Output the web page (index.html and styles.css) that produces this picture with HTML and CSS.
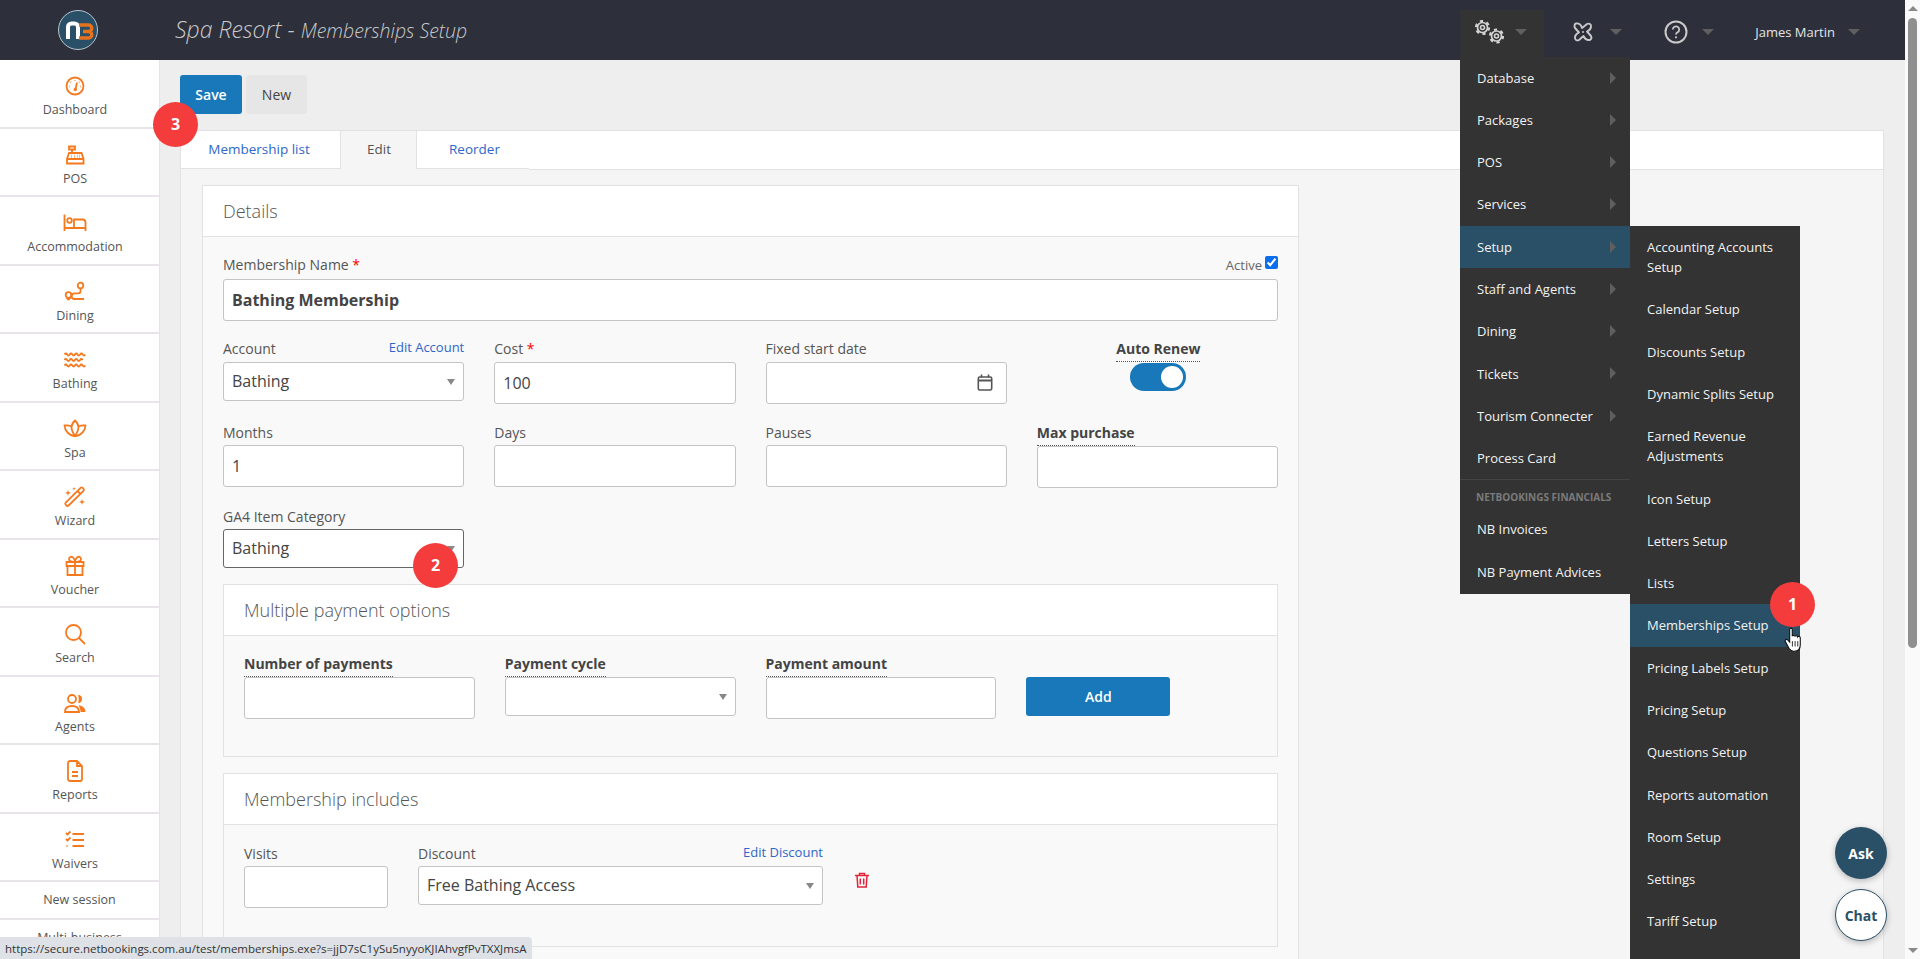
FILE: index.html
```html
<!DOCTYPE html>
<html lang="en">
<head>
  <meta charset="UTF-8" />
  <meta name="viewport" content="width=device-width, initial-scale=1.0" />
  <title>Spa Resort - Memberships Setup</title>
  <link rel="stylesheet" href="styles.css">
</head>
<body>
  <div class="page">

    <!-- Top bar -->
    <header class="topbar">
      <div class="logo">
        <svg width="40" height="40" viewBox="0 0 40 40">
          <circle cx="20" cy="20" r="19.5" fill="#2a5068" stroke="#b9c4cc" stroke-width="1"/>
          <path d="M10 29V17a3.5 3.5 0 0 1 3.5-3.5h3a3.5 3.5 0 0 1 3.5 3.5v12" fill="none" stroke="#fff" stroke-width="4"/>
          <path d="M21 15h9.5a3 3 0 0 1 0 6.5H25m5.500 0a3.200 3.200 0 0 1 0 6.500H21" fill="none" stroke="#e8711c" stroke-width="3.400"/>
        </svg>
      </div>
      <div class="title">Spa Resort - <small>Memberships Setup</small></div>
      <nav class="topnav">
        <div class="topnav-item topnav-open">
          <svg width="29" height="24" viewBox="0 0 29 24" fill="none" stroke="#d4d4d4">
            <circle cx="7.500" cy="7.500" r="2" stroke-width="1.600"/>
            <circle cx="7.500" cy="7.500" r="5" stroke-width="1.700"/>
            <circle cx="7.500" cy="7.500" r="6.500" stroke-width="2.200" stroke-dasharray="3.200 3.610"/>
            <circle cx="21.500" cy="16" r="2" stroke-width="1.600"/>
            <circle cx="21.500" cy="16" r="5" stroke-width="1.700"/>
            <circle cx="21.500" cy="16" r="6.500" stroke-width="2.200" stroke-dasharray="3.200 3.610"/>
          </svg>
          <span class="caret"></span>
        </div>
        <div class="topnav-item topnav-fan">
          <svg width="20" height="20" viewBox="0 0 20 20" fill="none" stroke="#c9c9c9" stroke-width="1.900" stroke-linejoin="round">
            <path d="M3 1.500C5 1 8 2 9 6l5-4c2-1 4.500 0 4 3-.5 3-3 4-4 4.500l4 4.500c1 2 0 4.500-3 4-3-.5-4-3-4.500-4L6 18c-2 1-4.500 0-4-3 .5-3 3-4 4-4.500L2 6C1 4 1.500 2 3 1.500z"/>
            <circle cx="10" cy="10" r="1" fill="#c9c9c9" stroke="none"/>
          </svg>
          <span class="caret"></span>
        </div>
        <div class="topnav-item topnav-help">
          <svg width="24" height="24" viewBox="0 0 24 24" fill="none" stroke="#c9c9c9" stroke-width="2">
            <circle cx="12" cy="12" r="10.500"/>
            <path d="M8.800 9.500a3.200 3.200 0 1 1 4.800 2.800c-1 .6-1.600 1.200-1.600 2.200" stroke-width="1.800"/>
            <circle cx="12" cy="17.300" r="1.100" fill="#c9c9c9" stroke="none"/>
          </svg>
          <span class="caret"></span>
        </div>
        <div class="topnav-item topnav-user">
          <span>James Martin</span>
          <span class="caret"></span>
        </div>
      </nav>
    </header>

    <div class="layout">

      <!-- Side menu -->
      <aside class="sidebar">
        <a class="side-item">
          <svg class="side-icon" viewBox="0 0 24 24"><circle cx="12" cy="12" r="8.500"/><path d="M12 6v.5M7.500 8l.4.4M16.500 8l-.4.4M6.300 12.500h.5M18 12.500h-.5M14 8.500l-1.500 6.500"/><circle cx="12.300" cy="15.500" r=".8"/></svg>
          <span>Dashboard</span>
        </a>
        <a class="side-item">
          <svg class="side-icon" viewBox="0 0 24 24"><path d="M4 20.500h16.500v-4.500l-2-6H6l-2 6zM4 16h16.500M6 3.500h6v3H6zM9 6.500V10M8 12.500h.5M11 12.500h.5M14 12.500h.5M16.500 12.500h.5M8 14.300h.5M11 14.300h.5M14 14.300h.5M16.500 14.300h.5"/></svg>
          <span>POS</span>
        </a>
        <a class="side-item">
          <svg class="side-icon" viewBox="0 0 24 24"><path d="M1.500 3.500V20M1.500 17h21v3M22.500 17v-5.500a3 3 0 0 0-3-3H11v8.500"/><circle cx="6.500" cy="9.500" r="2.300"/></svg>
          <span>Accommodation</span>
        </a>
        <a class="side-item">
          <svg class="side-icon" viewBox="0 0 24 24"><circle cx="17.500" cy="5.500" r="2.800"/><path d="M17.500 8.300v3a2 2 0 0 1-2 2h-4a2.800 2.800 0 0 0 0 5.700H21"/><circle cx="5.500" cy="15" r="2.800"/><path d="M5.500 20l2-2.500M5.500 20l-2-2.500"/></svg>
          <span>Dining</span>
        </a>
        <a class="side-item">
          <svg class="side-icon" viewBox="0 0 24 24"><path d="M1.500 6.500q1.300-2 2.600 0t2.600 0 2.600 0 2.600 0 2.600 0 2.600 0 2.600 0 2.600 0M1.500 12q1.300-2 2.600 0t2.600 0 2.600 0 2.600 0 2.600 0 2.600 0 2.600 0M1.500 17.500q1.300-2 2.600 0t2.600 0 2.600 0 2.600 0 2.600 0 2.600 0 2.600 0 2.600 0"/></svg>
          <span>Bathing</span>
        </a>
        <a class="side-item">
          <svg class="side-icon" viewBox="0 0 24 24"><path d="M12 3.500c2 2 3.500 4 3.500 6.500 0 3-1.500 6-3.500 9-2-3-3.500-6-3.500-9C8.500 7.500 10 5.500 12 3.500z"/><path d="M8.500 9.500C6.500 8.500 4 8 1.500 8.500c.3 5 4.500 10.500 10.500 10.500s10.200-5.500 10.500-10.500c-2.500-.5-5 0-7 1"/></svg>
          <span>Spa</span>
        </a>
        <a class="side-item">
          <svg class="side-icon" viewBox="0 0 24 24"><path d="M3.500 20.500l-.8-.8a1.500 1.500 0 0 1 0-2.100L17.600 2.900a1.500 1.500 0 0 1 2.100 0l.8.8a1.500 1.500 0 0 1 0 2.100L5.600 20.500a1.500 1.500 0 0 1-2.100 0zM14.500 6l3 3"/><path class="side-fill" d="M5 5l.7 2L8 8l-2.300.8L5 11l-.7-2.200L2 8l2.300-1zM11 2l.5 1.300 1.200.5-1.200.5L11 5.500l-.5-1.200-1.300-.5 1.300-.5zM19 14l.7 2 2.300 1-2.300.8L19 20l-.7-2.200-2.300-.8 2.300-1z"/></svg>
          <span>Wizard</span>
        </a>
        <a class="side-item">
          <svg class="side-icon" viewBox="0 0 24 24"><path d="M3.500 8h17v4h-17zM4.500 12h15v9h-15zM12 8v13M12 8c-3 0-6-.5-6-3s3-3 4.500-1S12 8 12 8zM12 8c3 0 6-.5 6-3s-3-3-4.500-1S12 8 12 8z"/></svg>
          <span>Voucher</span>
        </a>
        <a class="side-item">
          <svg class="side-icon" viewBox="0 0 24 24"><circle cx="10.500" cy="10.500" r="7.500"/><path d="M16 16l6 6"/></svg>
          <span>Search</span>
        </a>
        <a class="side-item">
          <svg class="side-icon" viewBox="0 0 24 24"><circle cx="9" cy="8" r="4"/><path d="M2 21c0-4 3-6 7-6s7 2 7 6z"/><path class="side-fill" d="M15 4a4 4 0 0 1 0 8c1-2.500 1-5.500 0-8zM15.500 14.500c4 0 7 2.500 7 6.500h-5c0-2.500-.7-4.800-2-6.500z"/></svg>
          <span>Agents</span>
        </a>
        <a class="side-item">
          <svg class="side-icon" viewBox="0 0 24 24"><path d="M5 4a2 2 0 0 1 2-2h7l5 5v13a2 2 0 0 1-2 2H7a2 2 0 0 1-2-2zM14 2v5h5M9 13h6M9 17h6"/></svg>
          <span>Reports</span>
        </a>
        <a class="side-item">
          <svg class="side-icon" viewBox="0 0 24 24"><path d="M9.500 6H21M9.500 12H21M9.500 18H21M3 5l1.500 1.500L7.500 3.500M3 11l1.500 1.500L7.500 9.500M3.500 18h1"/></svg>
          <span>Waivers</span>
        </a>
        <a class="side-link">New session</a>
        <a class="side-link">Multi-business</a>
      </aside>

      <!-- Main content -->
      <main class="main">
        <div class="actions">
          <button class="btn btn-primary">Save</button>
          <button class="btn">New</button>
        </div>

        <div class="tabs">
          <a class="tab">Membership list</a>
          <a class="tab tab-active">Edit</a>
          <a class="tab">Reorder</a>
        </div>

        <div class="tab-panel">
          <section class="card card-details">
            <h3 class="card-title">Details</h3>
            <div class="card-body">
              <div class="name-label">
                <label class="label">Membership Name <em>*</em></label>
                <label class="active-check">Active <input type="checkbox" checked /></label>
              </div>
              <input class="input input-name" type="text" value="Bathing Membership" />

              <div class="field-grid">
                <div class="field">
                  <div class="label-row">
                    <label class="label">Account</label>
                    <a class="link">Edit Account</a>
                  </div>
                  <div class="select"><span>Bathing</span></div>
                </div>
                <div class="field">
                  <label class="label">Cost <em>*</em></label>
                  <input class="input" type="text" value="100" />
                </div>
                <div class="field">
                  <label class="label">Fixed start date</label>
                  <div class="input date-input">
                    <svg width="16" height="17" viewBox="0 0 16 17" fill="none" stroke="#555" stroke-width="1.600">
                      <rect x="1.300" y="3" width="13.400" height="13" rx="1.500"/>
                      <path d="M1.300 6.500h13.400" stroke-width="2"/>
                      <path d="M4.500 .5v3M11.500 .5v3"/>
                    </svg>
                  </div>
                </div>
                <div class="field field-toggle">
                  <label class="label label-hint">Auto Renew</label>
                  <div class="toggle"><span class="toggle-knob"></span></div>
                </div>

                <div class="field">
                  <label class="label">Months</label>
                  <input class="input" type="text" value="1" />
                </div>
                <div class="field">
                  <label class="label">Days</label>
                  <input class="input" type="text" />
                </div>
                <div class="field">
                  <label class="label">Pauses</label>
                  <input class="input" type="text" />
                </div>
                <div class="field">
                  <label class="label label-hint">Max purchase</label>
                  <input class="input" type="text" />
                </div>

                <div class="field">
                  <label class="label">GA4 Item Category</label>
                  <div class="select select-focus"><span>Bathing</span></div>
                </div>
              </div>

              <section class="card card-sub">
                <h3 class="card-title">Multiple payment options</h3>
                <div class="card-body payment-grid">
                  <div class="field">
                    <label class="label label-hint">Number of payments</label>
                    <input class="input" type="text" />
                  </div>
                  <div class="field">
                    <label class="label label-hint">Payment cycle</label>
                    <div class="select"></div>
                  </div>
                  <div class="field">
                    <label class="label label-hint">Payment amount</label>
                    <input class="input" type="text" />
                  </div>
                  <button class="btn btn-primary btn-add">Add</button>
                </div>
              </section>

              <section class="card card-sub">
                <h3 class="card-title">Membership includes</h3>
                <div class="card-body includes-row">
                  <div class="field field-visits">
                    <label class="label">Visits</label>
                    <input class="input" type="text" />
                  </div>
                  <div class="field field-discount">
                    <div class="label-row">
                      <label class="label">Discount</label>
                      <a class="link">Edit Discount</a>
                    </div>
                    <div class="select"><span>Free Bathing Access</span></div>
                  </div>
                  <svg class="trash" width="14" height="16" viewBox="0 0 14 16" fill="none" stroke="#e0243a" stroke-width="1.500">
                    <path d="M0 3.500h14M4.500 3.500V1.500h5v2M2 3.500l.8 11.500h8.400L12 3.500M5.300 6.500v6M8.700 6.500v6"/>
                  </svg>
                </div>
              </section>
            </div>
          </section>
        </div>
      </main>
    </div>
  </div>

  <!-- Fake window scrollbar -->
  <div class="scrollbar">
    <span class="scroll-up"></span>
    <span class="scroll-thumb"></span>
    <span class="scroll-down"></span>
  </div>

  <!-- Open dropdown menus -->
  <ul class="menu menu-main">
    <li class="has-sub">Database</li>
    <li class="has-sub">Packages</li>
    <li class="has-sub">POS</li>
    <li class="has-sub">Services</li>
    <li class="has-sub menu-active">Setup</li>
    <li class="has-sub">Staff and Agents</li>
    <li class="has-sub">Dining</li>
    <li class="has-sub">Tickets</li>
    <li class="has-sub">Tourism Connecter</li>
    <li>Process Card</li>
    <li class="menu-divider"></li>
    <li class="menu-header">NETBOOKINGS FINANCIALS</li>
    <li>NB Invoices</li>
    <li>NB Payment Advices</li>
  </ul>
  <ul class="menu menu-sub">
    <li>Accounting Accounts Setup</li>
    <li>Calendar Setup</li>
    <li>Discounts Setup</li>
    <li>Dynamic Splits Setup</li>
    <li>Earned Revenue Adjustments</li>
    <li>Icon Setup</li>
    <li>Letters Setup</li>
    <li>Lists</li>
    <li class="menu-active">Memberships Setup</li>
    <li>Pricing Labels Setup</li>
    <li>Pricing Setup</li>
    <li>Questions Setup</li>
    <li>Reports automation</li>
    <li>Room Setup</li>
    <li>Settings</li>
    <li>Tariff Setup</li>
  </ul>

  <!-- Callout badges -->
  <span class="badge badge-1">1</span>
  <span class="badge badge-2">2</span>
  <span class="badge badge-3">3</span>

  <svg class="hand" width="20" height="26" viewBox="0 0 18 24">
    <path d="M5 2.200c0-1.600 2.400-1.600 2.400 0v6.300c.3-1 2.300-1 2.500.2.300-1 2.300-.9 2.500.4.400-.8 2.300-.6 2.400.8v6.500c0 3.500-2 6-5.500 6H8.500c-2 0-3-1-4-2.500L1 13.500c-.8-1.400 1-2.800 2.200-1.500L5 14z" fill="#fff" stroke="#111" stroke-width="1"/>
    <path d="M7.500 13v5M10 13v5M12.500 13v5" stroke="#111" stroke-width=".8"/>
  </svg>

  <button class="float-btn float-ask">Ask</button>
  <button class="float-btn float-chat">Chat</button>

  <div class="statusbar">https://secure.netbookings.com.au/test/memberships.exe?s=jjD7sC1ySu5nyyoKJIAhvgfPvTXXJmsA</div>
</body>
</html>
```

FILE: styles.css
```css
/* Global */
* {
  box-sizing: border-box;
}
html, body {
  height: 100%;
}
body {
  margin: 0;
  display: flex;
  height: 959px;
  overflow: hidden;
  background: #eee;
  color: #444;
  font-family: "Open Sans", Arial, sans-serif;
  font-size: 14px;
  line-height: 20px;
}
.page {
  flex: 1;
  min-width: 0;
  display: flex;
  flex-direction: column;
}

/* Top bar */
.topbar {
  flex: none;
  height: 60px;
  display: flex;
  align-items: center;
  background: #2d2f3b;
}
.logo {
  width: 175px;
  padding-left: 58px;
  display: flex;
}
.title {
  color: #c9c9c9;
  font-size: 23px;
  font-style: italic;
  font-weight: 300;
}
.title small {
  font-size: 19.500px;
}
.topnav {
  margin-left: auto;
  display: flex;
  align-self: stretch;
  padding-top: 10px;
  padding-right: 45px;
}
.topnav-item {
  height: 50px;
  padding-bottom: 6px;
  display: flex;
  align-items: center;
  color: #e4e4e4;
  font-size: 13px;
}
.topnav-open {
  width: 84px;
  padding-left: 15px;
  background: #333;
}
.topnav-fan {
  width: 96px;
  padding-left: 29px;
}
.topnav-help {
  width: 83px;
  padding-left: 24px;
}
.topnav-user {
  padding-left: 32px;
}
.caret {
  width: 0;
  height: 0;
  margin-left: 11px;
  border: 6px solid transparent;
  border-top-color: #5f5f5f;
  border-bottom-width: 0;
}
.topnav-help .caret {
  margin-left: 14px;
}
.topnav-fan .caret {
  margin-left: 17px;
}
.topnav-user .caret {
  margin-left: 13px;
}

.layout {
  flex: 1;
  min-height: 0;
  display: flex;
}

/* Side menu */
.sidebar {
  flex: none;
  width: 160px;
  background: #fff;
  border-right: 1px solid #e4e4e4;
  overflow: hidden;
}
.side-item {
  height: 68.5px;
  padding-top: 14px;
  padding-right: 9px;
  display: flex;
  flex-direction: column;
  align-items: center;
  gap: 2px;
  border-bottom: 2px solid #e9e4e9;
  color: #555;
  font-size: 12.500px;
}
.side-icon {
  flex: none;
  width: 24px;
  height: 24px;
  fill: none;
  stroke: #f57a1f;
  stroke-width: 1.800;
}
.side-icon .side-fill {
  fill: #f57a1f;
  stroke: none;
}
.side-link {
  display: block;
  height: 38px;
  line-height: 36px;
  text-align: center;
  border-bottom: 2px solid #e9e4e9;
  color: #555;
  font-size: 12.500px;
}

/* Main */
.main {
  flex: 1;
  min-width: 0;
  padding: 15px 21px 0 20px;
  overflow: hidden;
}
.actions {
  display: flex;
  gap: 4px;
  height: 55px;
}
.btn {
  width: 61px;
  height: 39px;
  padding: 0;
  border: 0;
  border-radius: 3px;
  background: #e6e6e6;
  color: #444;
  font-family: inherit;
  font-size: 14px;
}
.btn-primary {
  width: 62px;
  background: #1878b9;
  color: #fff;
  font-weight: 600;
}

.tabs {
  height: 39px;
  display: flex;
  background: #fff;
  border: 1px solid #e2e2e2;
  border-bottom: 0;
}
.tab {
  height: 38px;
  padding: 0 0 0 32px;
  line-height: 37px;
  color: #2f66c9;
  font-size: 13.500px;
  border-bottom: 1px solid #e2e2e2;
}
.tab:first-child {
  width: 159px;
  text-align: center;
  padding: 0 3px 0 0;
}
.tab-active {
  width: 77px;
  padding: 0 0 0 1px;
  text-align: center;
  color: #555;
  background: #f5f5f5;
  border-left: 1px solid #e2e2e2;
  border-right: 1px solid #e2e2e2;
  border-bottom: 0;
}
.tab:last-child {
  flex: 0 0 112px;
}
.tabs::after {
  content: "";
  height: 38px;
  flex: 1;
  border-bottom: 1px solid #e2e2e2;
}
.tab-panel {
  height: 800px;
  padding: 16px 0 0 21px;
  background: #f5f5f5;
  border-left: 1px solid #e2e2e2;
  border-right: 1px solid #e2e2e2;
}

/* Cards */
.card {
  background: #f9f9f9;
  border: 1px solid #e2e2e2;
}
.card-details {
  width: 1097px;
}
.card-title {
  margin: 0;
  height: 51px;
  padding-left: 20px;
  background: #fff;
  border-bottom: 1px solid #e2e2e2;
  color: #555;
  font-size: 18px;
  font-weight: 300;
  line-height: 50px;
}
.card-details > .card-body {
  padding: 18px 20px 0;
}
.card-sub {
  margin-bottom: 16px;
}

/* Form */
.name-label {
  height: 24px;
  display: flex;
  justify-content: space-between;
}
.label {
  display: block;
  height: 22.500px;
  color: #555;
}
.label em {
  color: #f00;
  font-style: normal;
}
.label-hint {
  display: inline-block;
  height: 23px;
  font-weight: 700;
  color: #444;
  border-bottom: 1px dotted #555;
}
.label-row {
  display: flex;
  justify-content: space-between;
}
.link {
  color: #2f66c9;
  font-size: 13px;
  line-height: 17px;
}
.active-check {
  display: flex;
  gap: 3px;
  color: #666;
  font-size: 13px;
  line-height: 20px;
}
.active-check input {
  width: 13px;
  height: 13px;
  margin: 1px 0 0;
  accent-color: #0b6ef0;
}
.input {
  display: block;
  width: 100%;
  height: 42px;
  padding: 0 8px;
  background: #fff;
  border: 1px solid #c4c4c4;
  border-radius: 3px;
  color: #444;
  font-family: inherit;
  font-size: 16px;
}
.input-name {
  font-weight: 700;
}
.select {
  position: relative;
  height: 39px;
  padding: 0 8px;
  background: #fff;
  border: 1px solid #c4c4c4;
  border-radius: 3px;
  color: #444;
  font-size: 16px;
  line-height: 37px;
}
.select::after {
  content: "";
  position: absolute;
  right: 8px;
  top: 16px;
  border: 4px solid transparent;
  border-top: 6px solid #888;
  border-bottom: 0;
}
.select-focus {
  border-color: #666;
}
.field-grid {
  margin-top: 18px;
  display: grid;
  grid-template-columns: repeat(4, 1fr);
  column-gap: 30px;
  row-gap: 19px;
  margin-bottom: 15.500px;
}
.date-input {
  display: flex;
  align-items: center;
  justify-content: flex-end;
  padding-right: 13px;
}
.field-toggle {
  display: flex;
  flex-direction: column;
  align-items: center;
  padding-left: 2px;
}
.toggle {
  width: 56px;
  height: 28px;
  padding: 3px;
  margin-top: 1px;
  display: flex;
  justify-content: flex-end;
  background: #1878b9;
  border-radius: 14px;
}
.toggle-knob {
  width: 22px;
  height: 22px;
  background: #fff;
  border-radius: 50%;
}
.payment-grid {
  display: grid;
  grid-template-columns: repeat(4, 1fr);
  column-gap: 30px;
  padding: 18px 20px 37px;
  align-items: end;
}
.payment-grid .field {
  height: 65px;
}
.payment-grid .select {
  height: 39px;
}
.btn-add {
  width: 144px;
  align-self: end;
  margin-bottom: 3px;
}
.includes-row {
  display: flex;
  padding: 19px 20px 35px;
  height: 121px;
}
.field-visits {
  width: 144px;
}
.field-discount {
  width: 405px;
  margin-left: 30px;
}
.trash {
  margin: 28px 0 0 32px;
}

/* Fake scrollbar */
.scrollbar {
  flex: none;
  width: 15px;
  position: relative;
  display: flex;
  flex-direction: column;
  align-items: center;
  background: #fafafa;
}
.scroll-up {
  margin-top: 6px;
  border: 5px solid transparent;
  border-bottom: 5px solid #8a8a8a;
  border-top: 0;
}
.scroll-thumb {
  width: 9px;
  height: 630px;
  margin-top: 7px;
  background: #8f8f8f;
  border-radius: 5px;
}
.scroll-down {
  margin-top: auto;
  margin-bottom: 6px;
  border: 5px solid transparent;
  border-top: 5px solid #8a8a8a;
  border-bottom: 0;
}

/* Dropdown menus */
.menu {
  position: absolute;
  margin: 0;
  padding: 0;
  list-style: none;
  background: #333;
  color: #f2f2f2;
  font-size: 13px;
}
.menu li {
  position: relative;
  padding: 11.150px 20px 11.150px 17px;
}
.menu-main {
  left: 1460px;
  top: 56.500px;
  width: 170px;
  height: 537.500px;
}
.menu-sub {
  left: 1630px;
  top: 226px;
  width: 170px;
  height: 733px;
  overflow: hidden;
}
.menu-active {
  background: #2a5068;
}
.menu .has-sub::after {
  content: "";
  position: absolute;
  right: 14px;
  top: 15px;
  border: 6px solid transparent;
  border-left-color: #5f5f5f;
  border-right: 0;
}
.menu .menu-divider {
  height: 1px;
  padding: 0;
  margin-top: 0;
  background: #444;
}
.menu .menu-header {
  padding: 9px 0 3px 16px;
  color: #7b7b7b;
  font-size: 10px;
  font-weight: 700;
  line-height: 16px;
}

/* Callouts */
.badge {
  position: absolute;
  width: 45px;
  height: 45px;
  background: #f43c3c;
  border-radius: 50%;
  color: #fff;
  font-size: 16px;
  font-weight: 700;
  line-height: 45px;
  text-align: center;
}
.badge-1 {
  left: 1770px;
  top: 582px;
}
.badge-2 {
  left: 413px;
  top: 543px;
}
.badge-3 {
  left: 153px;
  top: 102px;
}
.hand {
  position: absolute;
  left: 1784px;
  top: 627px;
}

/* Ask and Chat */
.float-btn {
  position: absolute;
  left: 1835px;
  width: 52px;
  height: 52px;
  padding: 0;
  border-radius: 50%;
  font-family: inherit;
  font-size: 14px;
  font-weight: 700;
  box-shadow: 0 2px 6px rgba(0, 0, 0, 0.25);
}
.float-ask {
  top: 827px;
  background: #2a5068;
  border: 0;
  color: #fff;
}
.float-chat {
  top: 889px;
  background: #fff;
  border: 1px solid #2a5068;
  color: #2a5068;
}

/* Browser status bar */
.statusbar {
  position: absolute;
  left: 0;
  bottom: 0;
  height: 22px;
  padding: 0 5px;
  background: #dee1e6;
  border-top-right-radius: 4px;
  color: #333;
  font-size: 11.500px;
  line-height: 23px;
}
```
